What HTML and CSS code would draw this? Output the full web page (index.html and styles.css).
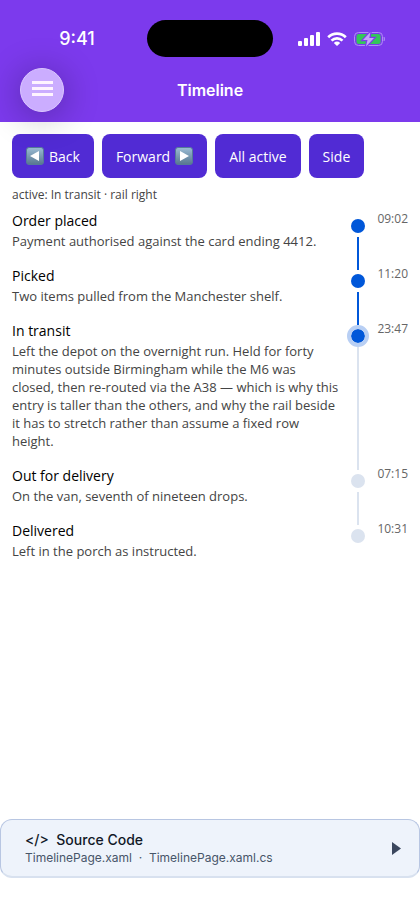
FILE: index.html
```html
<!DOCTYPE html>
<html lang="en">
<head>
<meta charset="utf-8">
<meta name="viewport" content="width=device-width, initial-scale=1">
<title>Timeline</title>
<link rel="stylesheet" href="styles.css">
</head>
<body>
<header class="header">
  <div class="status-bar">
    <span class="clock">9:41</span>
    <span class="island"></span>
    <div class="indicators">
      <svg class="signal" width="22" height="14" viewBox="0 0 22 14" fill="#fff" aria-hidden="true">
        <rect x="0" y="9" width="4" height="5" rx="1"/><rect x="6" y="6" width="4" height="8" rx="1"/><rect x="12" y="3" width="4" height="11" rx="1"/><rect x="18" y="0" width="4" height="14" rx="1"/>
      </svg>
      <svg class="wifi" width="20" height="14" viewBox="0 0 20 14" fill="none" stroke="#fff" stroke-width="2.7" aria-hidden="true">
        <path d="M1.2 5.2C6.2.3 13.8.3 18.8 5.2"/><path d="M4.5 8.6C7.6 5.6 12.4 5.6 15.5 8.6"/><path d="M6.8 10.9Q10 8.3 13.2 10.9L10 14Z" fill="#fff" stroke="none"/>
      </svg>
      <svg class="battery" width="31" height="16" viewBox="0 0 31 16" aria-hidden="true">
        <rect x=".5" y="1.5" width="28" height="13" rx="4" fill="none" stroke="#b18cf5"/>
        <rect x="2.5" y="3" width="24" height="10" rx="2.5" fill="#34c759"/>
        <path d="M30 6Q31.4 8 30 10Z" fill="#b18cf5" stroke="#b18cf5" stroke-width=".6"/>
        <path d="M16.500 1 9 9h4.500L12 15.500 20 7h-4.700Z" fill="#c4a5fa" stroke="#7c3aed" stroke-width="2.400" paint-order="stroke"/>
      </svg>
    </div>
  </div>
  <div class="nav-bar">
    <button class="menu" type="button" aria-label="Menu">
      <svg width="21" height="15" viewBox="0 0 21 15" fill="#fff4ff" aria-hidden="true"><path d="M0 0h21v3H0zM0 6h21v3H0zM0 12h21v3H0z"/></svg>
    </button>
    <h1 class="title">Timeline</h1>
  </div>
</header>
<main class="content">
  <div class="actions">
    <button class="action" type="button">
      <svg width="18" height="18" viewBox="0 0 18 18" aria-hidden="true"><defs><linearGradient id="key" x2="0" y2="1"><stop stop-color="#9bbdd5"/><stop offset="1" stop-color="#58768f"/></linearGradient></defs><rect x=".5" y=".5" width="17" height="17" rx="2.500" fill="url(#key)" stroke="#557b98"/><path d="M13 4v10L4 9z" fill="#fff"/></svg>
      Back
    </button>
    <button class="action" type="button">
      Forward
      <svg width="18" height="18" viewBox="0 0 18 18" aria-hidden="true"><rect x=".5" y=".5" width="17" height="17" rx="2.500" fill="url(#key)" stroke="#557b98"/><path d="M5 4v10l9-5z" fill="#fff"/></svg>
    </button>
    <button class="action" type="button">All active</button>
    <button class="action" type="button">Side</button>
  </div>
  <p class="state">active: In transit · rail right</p>
  <ol class="timeline">
    <li class="entry done">
      <div class="text"><h2>Order placed</h2><p>Payment authorised against the card ending 4412.</p></div>
      <div class="rail"><span class="marker"></span><span class="line"></span></div>
      <time>09:02</time>
    </li>
    <li class="entry done">
      <div class="text"><h2>Picked</h2><p>Two items pulled from the Manchester shelf.</p></div>
      <div class="rail"><span class="marker"></span><span class="line"></span></div>
      <time>11:20</time>
    </li>
    <li class="entry current">
      <div class="text"><h2>In transit</h2><p>Left the depot on the overnight run. Held for forty minutes outside Birmingham while the M6 was closed, then re-routed via the A38 — which is why this entry is taller than the others, and why the rail beside it has to stretch rather than assume a fixed row height.</p></div>
      <div class="rail"><span class="marker"></span><span class="line"></span></div>
      <time>23:47</time>
    </li>
    <li class="entry">
      <div class="text"><h2>Out for delivery</h2><p>On the van, seventh of nineteen drops.</p></div>
      <div class="rail"><span class="marker"></span><span class="line"></span></div>
      <time>07:15</time>
    </li>
    <li class="entry">
      <div class="text"><h2>Delivered</h2><p>Left in the porch as instructed.</p></div>
      <div class="rail"><span class="marker"></span></div>
      <time>10:31</time>
    </li>
  </ol>
</main>
<button class="source" type="button">
  <span class="source-text">
    <span class="source-title">&lt;/&gt;&nbsp; Source Code</span>
    <span class="source-files">TimelinePage.xaml &nbsp;·&nbsp; TimelinePage.xaml.cs</span>
  </span>
  <svg width="9" height="13" viewBox="0 0 9 13" aria-hidden="true"><path d="M0 0v13l9-6.500z" fill="#3b475e"/></svg>
</button>
</body>
</html>
```
FILE: styles.css
```css
* { box-sizing: border-box; }

body {
  margin: 0;
  min-height: 100vh;
  display: flex;
  flex-direction: column;
  background: #fff;
  font-family: "Open Sans", sans-serif;
}

h1, h2, p, ol { margin: 0; padding: 0; }

button { border: 0; font: inherit; cursor: pointer; }

.header {
  background: #7c3aed;
  color: #fff;
  font-family: Inter, sans-serif;
  padding-top: 20px;
}

.status-bar {
  display: grid;
  grid-template-columns: 1fr 126px 1fr;
  align-items: center;
}

.clock {
  justify-self: center;
  padding-left: 7px;
  font-size: 18px;
  font-weight: 500;
  line-height: 24px;
}

.island {
  height: 37px;
  border-radius: 19px;
  background: #000;
}

.indicators {
  display: flex;
  align-items: center;
  justify-content: center;
  gap: 7px;
  padding-right: 10px;
}

.indicators svg { flex: none; }

.nav-bar {
  display: grid;
  grid-template-columns: 44px 1fr 44px;
  align-items: center;
  padding: 11px 20px 10px;
}

.menu {
  position: relative;
  z-index: 1;
  display: flex;
  align-items: center;
  justify-content: center;
  height: 44px;
  padding: 0 0 3px;
  border: 1px solid #dcc8ff;
  border-radius: 50%;
  background: #cbadff;
  box-shadow: 0 4px 36px rgba(0, 0, 0, 0.32);
}

.title {
  font-size: 16px;
  font-weight: 600;
  line-height: 22px;
  text-align: center;
}

.content {
  flex: 1;
  padding: 12px;
}

.actions {
  display: flex;
  flex-wrap: wrap;
  gap: 8px;
}

.action {
  display: flex;
  align-items: center;
  gap: 5px;
  height: 44px;
  padding: 0 14px;
  border-radius: 8px;
  background: #512bd4;
  color: #fff;
  font-size: 14px;
}

.state {
  margin-top: 8px;
  color: #444;
  font-size: 12px;
  line-height: 17px;
}

.timeline {
  margin-top: 8px;
  list-style: none;
}

.entry {
  display: grid;
  grid-template-columns: 1fr 22px auto;
  column-gap: 8px;
  --rail: #dbe3ef;
}

.entry.done,
.entry.current { --dot: #0057d9; }

.entry.done { --rail: #0057d9; }

.text { padding-bottom: 16px; }

.text h2 {
  color: #000;
  font-size: 14px;
  font-weight: 400;
  line-height: 20px;
  margin-bottom: 1px;
}

.text p {
  color: #444;
  font-size: 13px;
  line-height: 18px;
}

.rail {
  display: flex;
  flex-direction: column;
  align-items: center;
  margin: 4px 0 -4px;
}

.marker {
  width: 22px;
  height: 22px;
  border: 4px solid transparent;
  border-radius: 50%;
  background: var(--dot, #dbe3ef) padding-box;
}

.current .marker { border-color: #b8cff4; }

.line {
  flex: 1;
  width: 2px;
  background: var(--rail);
}

.entry time {
  color: #666;
  font-size: 12px;
  line-height: 16px;
}

.source {
  display: flex;
  align-items: center;
  justify-content: space-between;
  margin-bottom: 34px;
  padding: 11px 18px 10px 24px;
  border: 1px solid #b8c6e2;
  border-bottom: 2px solid #d8e1ef;
  border-radius: 12px;
  background: #eef3fb;
  font-family: Inter, sans-serif;
  text-align: left;
}

.source-text {
  display: flex;
  flex-direction: column;
}

.source-title {
  color: #111827;
  font-size: 14px;
  font-weight: 500;
  line-height: 18px;
}

.source-files {
  color: #475569;
  font-size: 12px;
  line-height: 17px;
}
```
